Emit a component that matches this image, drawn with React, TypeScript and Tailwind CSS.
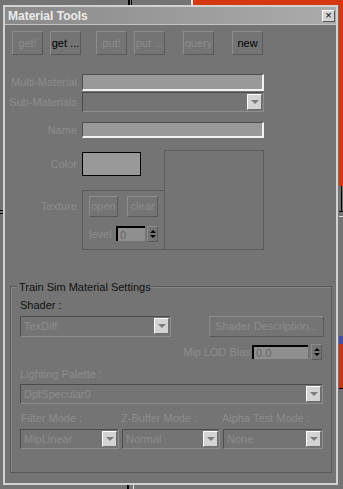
const DIS = "text-[#8c8c8c]";

function Btn({ label, disabled, className }: { label: string; disabled?: boolean; className: string }) {
  return (
    <div
      className={`flex items-center justify-center border border-t-[#8c8c8c] border-l-[#8c8c8c] border-b-[#5a5a5a] border-r-[#5a5a5a] leading-none ${
        disabled ? DIS : "text-black"
      } ${className}`}
    >
      {label}
    </div>
  );
}

function DownArrow() {
  return <div className="h-0 w-0 border-l-[4px] border-r-[4px] border-t-[4px] border-l-transparent border-r-transparent border-t-[#7c7c7c]" />;
}

function Drop({ text, className }: { text: string; className: string }) {
  return (
    <div
      className={`flex items-center border border-t-[#4c4c4c] border-l-[#4c4c4c] border-b-[#8e8e8e] border-r-[#8e8e8e] ${className}`}
    >
      <span className={`flex-1 truncate pl-[3px] ${DIS}`}>{text}</span>
      <div className="mr-[1px] flex h-[16px] w-[15px] items-center justify-center border border-t-white border-l-white border-b-[#6e6e6e] border-r-[#6e6e6e] bg-[#d3d3d3]">
        <DownArrow />
      </div>
    </div>
  );
}

function Spin() {
  return (
    <div className="flex h-[16px] w-[11px] flex-col items-center justify-center gap-[2px] border border-t-[#8c8c8c] border-l-[#8c8c8c] border-b-[#5a5a5a] border-r-[#5a5a5a]">
      <div className="h-0 w-0 border-l-[3px] border-r-[3px] border-b-[3px] border-l-transparent border-r-transparent border-b-black" />
      <div className="h-0 w-0 border-l-[3px] border-r-[3px] border-t-[3px] border-l-transparent border-r-transparent border-t-black" />
    </div>
  );
}

function Field({ className }: { className: string }) {
  return (
    <div
      className={`border-t border-l border-b-2 border-r-2 border-t-[#4e4e4e] border-l-[#4e4e4e] border-b-[#f2f2f2] border-r-[#f2f2f2] bg-[#999999] ${className}`}
    />
  );
}

export default function App() {
  return (
    <div className="relative h-[489px] w-[343px] overflow-hidden bg-[#747474] pl-[3px] pt-[5px] font-['Liberation_Sans',Arial,sans-serif] text-[11px]">
      {/* desktop behind the window */}
      <div className="absolute left-[128px] top-0 h-[5px] w-[2px] bg-black" />
      <div className="absolute left-[131px] top-0 h-[5px] w-[1px] bg-black" />
      <div className="absolute left-[191px] top-0 h-[5px] w-[2px] bg-[#e8e8e8]" />
      <div className="absolute left-[193px] top-0 h-[5px] w-[150px] bg-[#d4380e]" />
      <div className="absolute left-[339px] top-0 h-[186px] w-[4px] bg-[#d4380e]" />
      <div className="absolute left-[341px] top-[186px] h-[26px] w-[1px] bg-black" />
      <div className="absolute left-[339px] top-[211px] h-[1px] w-[4px] bg-black" />
      <div className="absolute left-[339px] top-[216px] h-[1px] w-[4px] bg-[#e0e0e0]" />
      <div className="absolute left-[339px] top-[336px] h-[8px] w-[4px] bg-[#4a4aa8]" />
      <div className="absolute left-[339px] top-[344px] h-[44px] w-[4px] bg-[#c8361a]" />
      <div className="absolute left-[339px] top-[388px] h-[1px] w-[4px] bg-black" />
      <div className="absolute left-0 top-[210px] h-[1px] w-[3px] bg-black" />
      <div className="absolute left-0 top-[213px] h-[1px] w-[3px] bg-black" />
      <div className="absolute left-[127px] top-[485px] h-[4px] w-[2px] bg-black" />
      <div className="absolute left-[133px] top-[485px] h-[4px] w-[1px] bg-[#e0e0e0]" />

      <div className="flex h-[480px] w-[335px] flex-col border-2 border-[#d2d2d2] bg-[#747474]">
        <div className="flex h-[18px] items-center justify-between border-b border-[#c4c4c4] bg-gradient-to-r from-[#8a8a8a] to-[#ababab] pl-[3px] pr-[1px]">
          <span className="text-[12px] font-bold text-[#ececec]">Material Tools</span>
          <div className="flex h-[12px] w-[13px] items-center justify-center border border-t-white border-l-white border-b-[#555] border-r-[#555] bg-[#d4d4d4] text-[11px] leading-none text-black">
            ×
          </div>
        </div>

        <div className="mt-[6px] flex pl-[7px]">
          <Btn label="get!" disabled className="h-[24px] w-[31px]" />
          <Btn label="get ..." className="ml-[7px] h-[24px] w-[31px]" />
          <Btn label="put!" disabled className="ml-[15px] h-[24px] w-[31px]" />
          <Btn label="put ..." disabled className="ml-[7px] h-[24px] w-[31px]" />
          <Btn label="query" disabled className="ml-[18px] h-[24px] w-[31px]" />
          <Btn label="new" className="ml-[18px] h-[24px] w-[31px]" />
        </div>

        <div className="mt-[19px] flex items-center">
          <span className={`w-[72px] text-right ${DIS}`}>Multi-Material</span>
          <Field className="ml-[5px] h-[17px] w-[182px]" />
        </div>
        <div className="mt-[1px] flex items-center">
          <span className={`w-[72px] text-right ${DIS}`}>Sub-Materials</span>
          <Drop text="" className="ml-[5px] h-[20px] w-[182px]" />
        </div>
        <div className="mt-[10px] flex items-center">
          <span className={`w-[72px] text-right ${DIS}`}>Name</span>
          <Field className="ml-[5px] h-[16px] w-[182px]" />
        </div>

        <div className="mt-[11px] flex">
          <div className={`flex w-[72px] flex-col items-end ${DIS}`}>
            <span className="mt-[6px]">Color</span>
            <span className="mt-[26px]">Texture</span>
          </div>
          <div className="ml-[5px] flex w-[82px] flex-col">
            <div className="mt-[2px] h-[24px] w-[59px] border border-black bg-[#999999]" />
            <div className="mt-[14px] flex h-[60px] flex-col border-t border-l border-b border-[#5c5c5c] pl-[6px] pt-[5px]">
              <div className="flex">
                <Btn label="open" disabled className="h-[21px] w-[29px]" />
                <Btn label="clear" disabled className="ml-[9px] h-[21px] w-[31px]" />
              </div>
              <div className="mt-[9px] flex items-center">
                <span className={`w-[27px] ${DIS}`}>level</span>
                <div className="flex h-[15px] w-[29px] items-center border-t-2 border-l-2 border-t-black border-l-black bg-[#8f8f8f] pl-[2px] text-[#666]">
                  0
                </div>
                <div className="ml-[2px]">
                  <Spin />
                </div>
              </div>
            </div>
          </div>
          <div className="h-[100px] w-[100px] border border-[#5c5c5c]" />
        </div>

        <div className="relative ml-[5px] mt-[36px] h-[187px] w-[322px] border border-[#595959] pl-[9px] shadow-[inset_1px_1px_0_#888]">
          <span className="absolute -top-[8px] left-[6px] bg-[#747474] px-[2px] text-[#111]">Train Sim Material Settings</span>
          <div className="mt-[10px] h-[14px] text-[#111]">Shader :</div>
          <div className="mt-[5px] flex items-center">
            <Drop text="TexDiff" className="h-[21px] w-[151px]" />
            <Btn label="Shader Description..." disabled className="ml-[38px] h-[21px] w-[115px]" />
          </div>
          <div className="mt-[7px] flex items-center justify-end pr-[9px]">
            <span className={DIS}>Mip LOD Bias</span>
            <div className="ml-[1px] flex h-[14px] w-[56px] items-center border-t-2 border-l-2 border-t-black border-l-black bg-[#8f8f8f] pl-[2px] text-[#666]">
              0.0
            </div>
            <div className="ml-[3px]">
              <Spin />
            </div>
          </div>
          <div className={`mt-[6px] h-[14px] ${DIS}`}>Lighting Palette :</div>
          <Drop text="DptSpecular0" className="mt-[4px] h-[20px] w-[303px]" />
          <div className={`mt-[6px] flex h-[14px] ${DIS}`}>
            <span className="w-[101px] pl-[1px]">Filter Mode :</span>
            <span className="w-[101px]">Z-Buffer Mode :</span>
            <span>Alpha Test Mode :</span>
          </div>
          <div className="mt-[5px] flex">
            <Drop text="MipLinear" className="h-[20px] w-[99px]" />
            <Drop text="Normal" className="ml-[3px] h-[20px] w-[98px]" />
            <Drop text="None" className="ml-[3px] h-[20px] w-[100px]" />
          </div>
        </div>
      </div>
    </div>
  );
}
